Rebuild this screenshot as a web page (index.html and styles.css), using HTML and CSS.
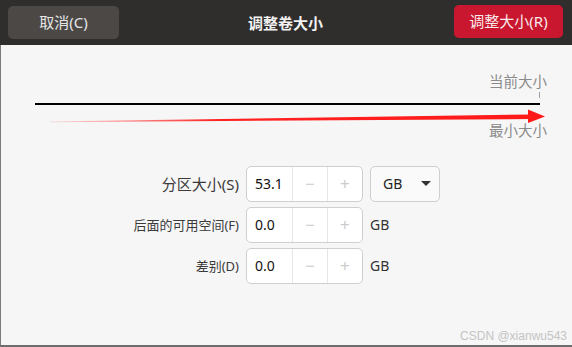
FILE: index.html
```html
<!DOCTYPE html>
<html lang="zh-CN">
<head>
    <meta charset="UTF-8">
    <title>调整卷大小</title>
    <link rel="stylesheet" href="styles.css">
</head>
<body>
    <div class="window">
        <div class="header">
            <button class="btn btn-cancel">取消(C)</button>
            <div class="title">调整卷大小</div>
            <button class="btn btn-resize">调整大小(R)</button>
        </div>

        <div class="content">
            <div class="scale">
                <div class="scale-label">当前大小</div>
                <div class="tick"></div>
                <div class="track"></div>
                <div class="gap"></div>
                <div class="scale-label">最小大小</div>
                <!-- 标注箭头 -->
                <svg class="arrow" width="572" height="30" viewBox="0 0 572 30">
                    <defs>
                        <linearGradient id="shaft" x1="0" x2="1" y1="0" y2="0">
                            <stop offset="0" stop-color="#ff5050" stop-opacity="0.2"/>
                            <stop offset="0.35" stop-color="#ff2020"/>
                            <stop offset="1" stop-color="#ff1a1a"/>
                        </linearGradient>
                    </defs>
                    <polygon points="50,15.5 532,8.5 532,13 50,16.2" fill="url(#shaft)"/>
                    <polygon points="528,3.5 545,10.5 528,17" fill="#ff1a1a"/>
                </svg>
            </div>

            <div class="form">
                <label class="label">分区大小(S)</label>
                <div class="spin">
                    <span class="spin-value">53.1</span>
                    <span class="spin-btn">−</span>
                    <span class="spin-btn">+</span>
                </div>
                <div class="combo">GB<span class="caret"></span></div>

                <label class="label small">后面的可用空间(F)</label>
                <div class="spin">
                    <span class="spin-value">0.0</span>
                    <span class="spin-btn">−</span>
                    <span class="spin-btn">+</span>
                </div>
                <div class="unit">GB</div>

                <label class="label small">差别(D)</label>
                <div class="spin">
                    <span class="spin-value">0.0</span>
                    <span class="spin-btn">−</span>
                    <span class="spin-btn">+</span>
                </div>
                <div class="unit">GB</div>
            </div>

            <div class="watermark">CSDN @xianwu543</div>
        </div>
    </div>
</body>
</html>
```

FILE: styles.css
```css
body {
    margin: 0;
    font-family: "Noto Sans", "Noto Sans CJK SC", sans-serif;
    background-color: #f6f6f6;
}
.window {
    width: 572px;
    height: 347px;
    display: flex;
    flex-direction: column;
    overflow: hidden;
}
.header {
    height: 45px;
    flex-shrink: 0;
    background-color: #302e2d;
    display: grid;
    grid-template-columns: 1fr auto 1fr;
    align-items: center;
    padding: 0 9px 0 8px;
}
.btn {
    font-family: inherit;
    font-size: 15px;
    border: none;
    border-radius: 5px;
    height: 33px;
    padding: 0;
    line-height: 33px;
}
.btn-cancel {
    width: 111px;
    margin-top: -1px;
    background-color: #4b4846;
    color: #e6e6e6;
    justify-self: start;
}
.btn-resize {
    width: 109px;
    margin-top: -3px;
    background-color: #c8172e;
    color: #fbeaec;
    justify-self: end;
}
.title {
    color: #f2f2f2;
    font-weight: bold;
    font-size: 15px;
    margin-top: -1px;
}
.content {
    flex: 1;
    display: flex;
    flex-direction: column;
    border-left: 1px solid #7a7a7a;
    border-bottom: 2px solid #6e6e6e;
}
.scale {
    position: relative;
    padding: 27px 25px 0 34px;
}
.scale-label {
    text-align: right;
    font-size: 14.5px;
    line-height: 18px;
    color: #8b8b8b;
}
.tick {
    width: 1px;
    height: 6px;
    margin: 2px 7px 0 auto;
    background-color: #a0a0a0;
}
.track {
    height: 2px;
    margin: 5px 7px 0 0;
    background-color: #000;
}
.gap {
    height: 16px;
}
.arrow {
    position: absolute;
    left: -1px;
    top: 61px;
}
.form {
    display: grid;
    grid-template-columns: 238px 117px auto;
    grid-auto-rows: 35px;
    column-gap: 7px;
    row-gap: 6px;
    margin-top: 27px;
    align-items: center;
}
.label {
    text-align: right;
    font-size: 15px;
    color: #3a3a3a;
}
.label.small {
    font-size: 13px;
}
.spin {
    height: 34px;
    display: flex;
    background-color: #fff;
    border: 1px solid #cfcfcf;
    border-radius: 5px;
}
.spin-value {
    width: 38px;
    padding-left: 8px;
    line-height: 34px;
    font-size: 14px;
    color: #111;
}
.spin-btn {
    width: 35px;
    border-left: 1px solid #e6e6e6;
    text-align: center;
    line-height: 34px;
    font-size: 17px;
    color: #cccccc;
}
.combo {
    width: 56px;
    height: 34px;
    padding-left: 12px;
    display: flex;
    align-items: center;
    background-color: #fafafa;
    border: 1px solid #cfcfcf;
    border-radius: 5px;
    font-size: 14px;
    color: #222;
}
.caret {
    width: 0;
    height: 0;
    margin-left: 19px;
    border-left: 5px solid transparent;
    border-right: 5px solid transparent;
    border-top: 5px solid #333;
}
.unit {
    font-size: 14px;
    color: #333;
}
.watermark {
    margin-top: auto;
    padding: 0 5px 2px 0;
    text-align: right;
    font-family: "Liberation Sans", sans-serif;
    font-size: 12px;
    color: #c4c4c4;
}
```
